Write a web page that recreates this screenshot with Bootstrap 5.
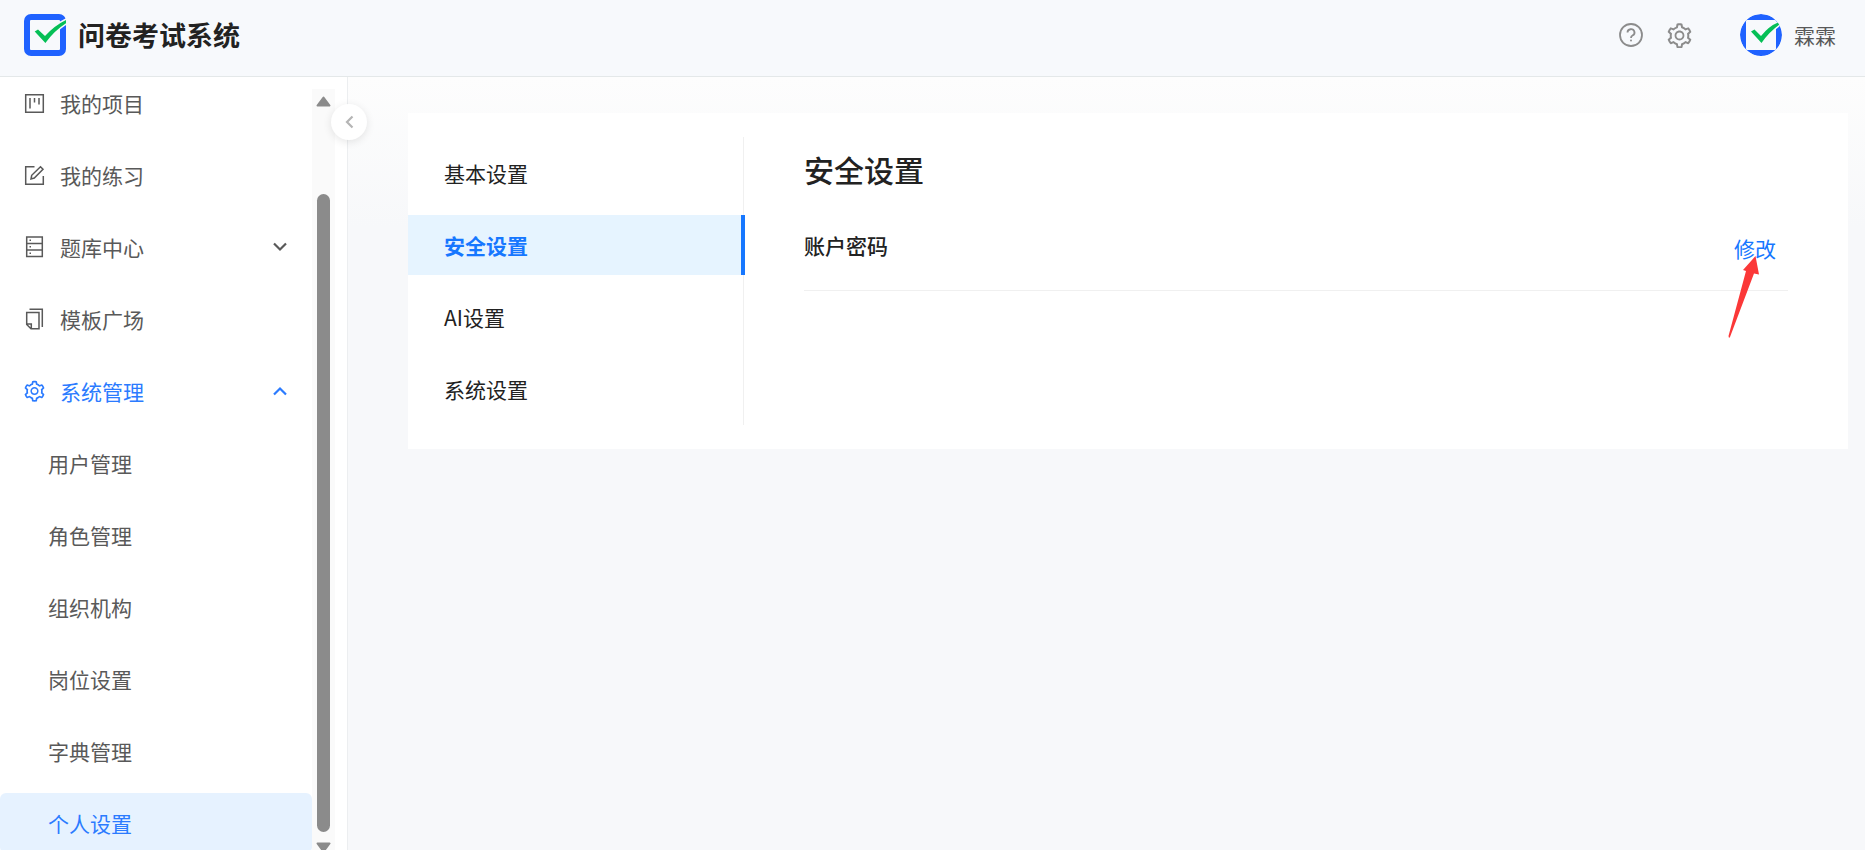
<!DOCTYPE html>
<html lang="zh-CN">
<head>
<meta charset="utf-8">
<meta name="viewport" content="width=device-width, initial-scale=1">
<title>问卷考试系统</title>
<link href="https://cdn.jsdelivr.net/npm/bootstrap@5.3.0/dist/css/bootstrap.min.css" rel="stylesheet">
<style>
  body { font-family: "Noto Sans CJK SC", sans-serif; font-size: 21px; line-height: 32px; color: #222; background: #f7f8fa; }
  a { text-decoration: none; }
  svg { display: block; flex: none; }
  .topbar { height: 77px; padding: 0 29px 6px 24px; background: #f7f9fc; border-bottom: 1px solid #e4e8e9; }
  .brand-title { font-size: 27px; font-weight: 700; color: #222; }
  .tool-btn { color: #8c8c8c; }
  .user-name { color: #595959; }
  .avatar-logo { border-radius: 50%; overflow: hidden; }
  .workspace { min-height: 0; }
  .sidebar { width: 348px; background: #fff; border-right: 1px solid #eceef0; }
  .side-scroll { width: 312px; overflow: hidden; }
  .side-menu { margin-top: -4px; gap: 12px; }
  .side-link { height: 60px; padding: 0 25px 0 24px; color: #595959; border-radius: 6px; gap: 15px; }
  .side-link.sub { padding-left: 48px; }
  .side-link.open, .side-link.current { color: #2b7bff; }
  .side-link.current { background: #e6f2ff; }
  .scroll-track { width: 23px; margin-top: 12px; padding-top: 7px; background: #fafafa; overflow: hidden; }
  .scroll-thumb { width: 13px; margin: 87px 0 10px; border-radius: 7px; background: #8b8b8b; }
  .scroll-end { height: 8px; overflow: hidden; }
  .collapse-btn { top: 27px; right: -20px; width: 36px; height: 36px; background: #fff; box-shadow: 0 2px 8px rgba(0,0,0,.1); color: #b5b5b5; z-index: 2; }
  .page-area { padding: 36px 17px 36px 60px; background: linear-gradient(#fdfdfd, #f7f8fa 150px); }
  .panel { background: #fff; padding: 24px 0; }
  .tabs-col { width: 336px; border-right: 1px solid #f0f0f0; padding: 6px 0; gap: 12px; }
  .tab-link { height: 60px; padding-left: 36px; color: #222; }
  .tab-link.current { margin-right: -2px; background: #e6f4ff; border-right: 4px solid #1677ff; color: #1677ff; font-weight: 700; }
  .detail { padding: 12px 60px 0; }
  .detail-title { font-size: 30px; line-height: 40px; font-weight: 500; }
  .setting-row { height: 94px; padding-top: 3px; border-bottom: 1px solid #f0f0f0; }
  .setting-name { font-weight: 500; }
  .edit-link { color: #1677ff; padding: 6px 12px 0 0; }
  .pointer-arrow { top: 59px; right: 20px; pointer-events: none; }
</style>
</head>
<body>
<svg width="0" height="0" class="position-absolute" aria-hidden="true">
  <symbol id="gear" viewBox="62 52 900 900"><path fill="currentColor" d="M924.8 625.7l-65.5-56c3.100-19 4.700-38.400 4.700-57.800s-1.600-38.800-4.700-57.800l65.500-56a32.030 32.030 0 009.300-35.200l-.9-2.600a443.740 443.740 0 00-79.700-137.900l-1.800-2.100a32.120 32.120 0 00-35.100-9.500l-81.300 28.900c-30-24.600-63.500-44-99.700-57.600l-15.700-85a32.050 32.050 0 00-25.800-25.700l-2.700-.5c-52.100-9.400-106.900-9.400-159 0l-2.700.5a32.050 32.050 0 00-25.800 25.700l-15.800 85.400a351.860 351.860 0 00-99 57.400l-81.900-29.100a32 32 0 00-35.100 9.500l-1.800 2.100a446.020 446.020 0 00-79.700 137.900l-.9 2.600c-4.500 12.500-.8 26.500 9.300 35.200l66.300 56.600c-3.100 18.800-4.600 38-4.600 57.100 0 19.200 1.500 38.400 4.600 57.100L99 625.500a32.030 32.030 0 00-9.300 35.200l.9 2.600c18.100 50.400 44.900 96.900 79.700 137.900l1.800 2.100a32.120 32.120 0 0035.100 9.500l81.900-29.100c29.800 24.500 63.100 43.900 99 57.400l15.800 85.400a32.050 32.050 0 0025.800 25.700l2.700.5a449.400 449.400 0 00159 0l2.700-.5a32.050 32.050 0 0025.800-25.700l15.700-85a350 350 0 0099.700-57.600l81.300 28.900a32 32 0 0035.100-9.500l1.800-2.100c34.800-41.100 61.600-87.500 79.700-137.900l.9-2.600c4.500-12.300.8-26.300-9.300-35zM788.300 465.900c2.500 15.100 3.800 30.600 3.800 46.100s-1.300 31-3.800 46.100l-6.600 40.100 74.700 63.900a370.030 370.030 0 01-42.600 73.600L721 702.800l-31.400 25.800c-23.900 19.600-50.500 35-79.300 45.800l-38.100 14.300-17.900 97a377.500 377.500 0 01-85 0l-17.900-97.200-37.800-14.500c-28.500-10.800-55-26.200-78.700-45.700l-31.400-25.900-93.400 33.200c-17-22.900-31.200-47.600-42.600-73.600l75.500-64.500-6.500-40c-2.400-14.900-3.700-30.300-3.700-45.500 0-15.300 1.200-30.600 3.700-45.500l6.500-40-75.500-64.500c11.300-26.100 25.600-50.700 42.600-73.600l93.400 33.200 31.400-25.900c23.700-19.500 50.200-34.900 78.700-45.700l37.900-14.300 17.900-97.200c28.100-3.200 56.800-3.200 85 0l17.900 97 38.100 14.300c28.700 10.800 55.400 26.200 79.300 45.800l31.400 25.800 92.800-32.900c17 22.900 31.200 47.600 42.600 73.600L781.800 426l6.500 39.900zM512 326c-97.200 0-176 78.800-176 176s78.800 176 176 176 176-78.800 176-176-78.800-176-176-176zm79.200 255.200A111.600 111.600 0 01512 614c-29.900 0-58-11.700-79.200-32.800A111.600 111.600 0 01400 502c0-29.900 11.700-58 32.800-79.200C454 401.600 482.100 390 512 390c29.900 0 58 11.600 79.200 32.800A111.600 111.600 0 01624 502c0 29.900-11.700 58-32.800 79.200z"/></symbol>
</svg>
<div class="vh-100 d-flex flex-column overflow-hidden">
  <header class="topbar d-flex align-items-center justify-content-between flex-shrink-0">
    <a href="#" class="d-flex align-items-center gap-2">
      <svg width="42" height="42" viewBox="0 0 42 42"><rect x="3" y="3" width="36" height="36" rx="4" fill="none" stroke="#1f62ff" stroke-width="6"/><path d="M10.700 17.500L14 15.500L21 22Q31 11 43 5.500V8.500Q30 16.500 21.400 29Z" fill="#05bf56" stroke="#f7f9fc" stroke-width="3" paint-order="stroke"/></svg>
      <span class="brand-title ps-1">问卷考试系统</span>
    </a>
    <div class="d-flex align-items-center">
      <button type="button" class="tool-btn btn border-0 p-0 me-4" aria-label="帮助">
        <svg width="24" height="24" viewBox="0 0 24 24" fill="none" stroke="currentColor" stroke-width="1.800"><circle cx="12" cy="12" r="11"/><path d="M8.500 9.500a3.500 3.300 0 1 1 5 3q-1.500.7-1.500 2.500"/><circle cx="12" cy="17.500" r="1" fill="currentColor" stroke="none"/></svg>
      </button>
      <button type="button" class="tool-btn btn border-0 p-0 me-5" aria-label="设置">
        <svg width="25" height="25"><use href="#gear"/></svg>
      </button>
      <a href="#" class="user-name d-flex align-items-center gap-2">
        <svg class="avatar-logo" width="42" height="42" viewBox="0 0 42 42"><circle cx="21" cy="21" r="21" fill="#1f62ff"/><rect x="6" y="6" width="30" height="30" rx="1" fill="#f7f9fc"/><path d="M11 17.500L14.500 15.500L21 22Q29 12 38 8.500L39.500 10.500Q29 18 21.500 29Z" fill="#05bf56" stroke="#f7f9fc" stroke-width="3" paint-order="stroke"/></svg>
        <span class="ps-1">霖霖</span>
      </a>
    </div>
  </header>
  <div class="workspace d-flex flex-grow-1">
    <aside class="sidebar d-flex flex-shrink-0 position-relative">
      <nav class="side-scroll">
        <div class="side-menu d-flex flex-column">
          <a href="#" class="side-link d-flex align-items-center"><svg width="21" height="21" viewBox="0 0 21 21" fill="none" stroke="currentColor" stroke-width="1.500"><path d="M1.700 1.700H19.300V19.300H1.700Z"/><path d="M6 5V15.500M10.500 5V9.500M15 5V11.500"/></svg>我的项目</a>
          <a href="#" class="side-link d-flex align-items-center"><svg width="21" height="21" viewBox="0 0 21 21" fill="none" stroke="currentColor" stroke-width="1.500"><path d="M10.500 1.700H1.700V19.300H19.300V11M7 14l.7-3.700L16.500 1.700l2.500 2.500L10.300 13Z"/></svg>我的练习</a>
          <a href="#" class="side-link d-flex align-items-center"><svg width="21" height="22" viewBox="0 0 21 22" fill="none" stroke="currentColor" stroke-width="1.500"><path d="M2.700 1H18.300V20.500H2.700ZM2.700 7.500H18.300M2.700 14H18.300"/><path d="M5.500 4.300H7M5.500 10.800H7M5.500 17.300H7"/></svg>题库中心<svg class="ms-auto" width="14" height="10" viewBox="0 0 14 10" fill="none" stroke="currentColor" stroke-width="2.200"><path d="M1 1.500L7 7.500L13 1.500"/></svg></a>
          <a href="#" class="side-link d-flex align-items-center"><svg width="21" height="22" viewBox="0 0 21 22" fill="none" stroke="currentColor" stroke-width="1.500"><path d="M5.500 1.200H18.300V19M2.700 4.500H15V20.800H7L2.700 16.500ZM2.700 16H7.300V20.800"/></svg>模板广场</a>
          <a href="#" class="side-link open d-flex align-items-center"><svg width="21" height="22"><use href="#gear"/></svg>系统管理<svg class="ms-auto" width="14" height="10" viewBox="0 0 14 10" fill="none" stroke="currentColor" stroke-width="2.200"><path d="M1 8.500L7 2.500L13 8.500"/></svg></a>
          <a href="#" class="side-link sub d-flex align-items-center">用户管理</a>
          <a href="#" class="side-link sub d-flex align-items-center">角色管理</a>
          <a href="#" class="side-link sub d-flex align-items-center">组织机构</a>
          <a href="#" class="side-link sub d-flex align-items-center">岗位设置</a>
          <a href="#" class="side-link sub d-flex align-items-center">字典管理</a>
          <a href="#" class="side-link sub current d-flex align-items-center" aria-current="page">个人设置</a>
        </div>
      </nav>
      <div class="scroll-track d-flex flex-column align-items-center" aria-hidden="true">
        <svg width="15" height="11" viewBox="0 0 15 11"><path d="M7.500 1.500L13.500 9.500H1.500Z" fill="#8b8b8b" stroke="#8b8b8b" stroke-width="2" stroke-linejoin="round"/></svg>
        <div class="scroll-thumb flex-grow-1"></div>
        <div class="scroll-end flex-shrink-0"><svg width="15" height="11" viewBox="0 0 15 11"><path d="M7.500 9.500L13.500 1.500H1.500Z" fill="#8b8b8b" stroke="#8b8b8b" stroke-width="2" stroke-linejoin="round"/></svg></div>
      </div>
      <button type="button" class="collapse-btn btn border-0 p-0 rounded-circle position-absolute d-flex align-items-center justify-content-center" aria-label="收起菜单">
        <svg width="9" height="14" viewBox="0 0 9 14" fill="none" stroke="currentColor" stroke-width="2.200"><path d="M7.500 1.500L2 7L7.500 12.500"/></svg>
      </button>
    </aside>
    <main class="page-area flex-grow-1">
      <section class="panel d-flex">
        <nav class="tabs-col d-flex flex-column flex-shrink-0">
          <a href="#" class="tab-link d-flex align-items-center">基本设置</a>
          <a href="#" class="tab-link current d-flex align-items-center" aria-current="true">安全设置</a>
          <a href="#" class="tab-link d-flex align-items-center">AI设置</a>
          <a href="#" class="tab-link d-flex align-items-center">系统设置</a>
        </nav>
        <div class="detail flex-grow-1">
          <h1 class="detail-title mb-2">安全设置</h1>
          <div class="setting-row d-flex align-items-center justify-content-between position-relative">
            <span class="setting-name">账户密码</span>
            <a href="#" class="edit-link">修改</a>
            <svg class="pointer-arrow position-absolute" width="50" height="84" viewBox="0 0 50 84" aria-hidden="true"><path d="M37.500 0L41 18.500L36 17.500L12 81L11 82L10.500 80L28 15L25 14Z" fill="#fb3838"/></svg>
          </div>
        </div>
      </section>
    </main>
  </div>
</div>
<script src="https://cdn.jsdelivr.net/npm/bootstrap@5.3.0/dist/js/bootstrap.bundle.min.js"></script>
</body>
</html>
